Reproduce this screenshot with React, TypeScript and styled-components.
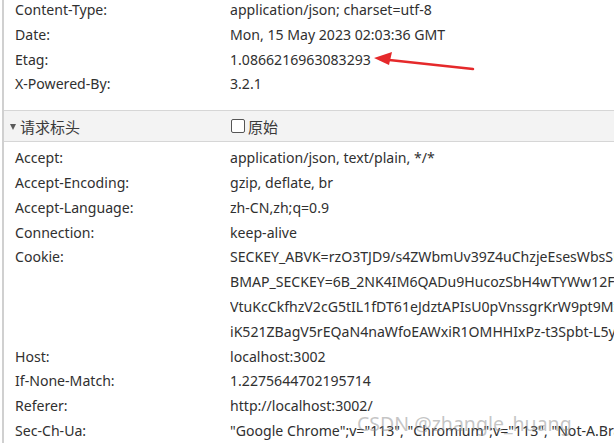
import React, { FC } from "react";
import styled, { createGlobalStyle } from "styled-components";

const GlobalStyle = createGlobalStyle`
  html, body {
    margin: 0;
    padding: 0;
    background: #ffffff;
    overflow: hidden;
  }
  body {
    font-family: "Noto Sans", "Noto Sans CJK SC", sans-serif;
    color: #303030;
  }
`;

const Page = styled.div`
  position: relative;
  width: 614px;
  height: 443px;
  overflow: hidden;
  border-left: 2px solid #d0d0d0;
  margin-left: 2px;
  box-sizing: border-box;
`;

const Section = styled.div<{ top?: number; bottom?: number }>`
  padding: ${(p) => p.top ?? 0}px 0 ${(p) => p.bottom ?? 0}px 11px;
`;

const Row = styled.div`
  display: grid;
  grid-template-columns: 215px 1fr;
  font-size: 14.1px;
  line-height: 24.8px;
  white-space: nowrap;
`;

const Label = styled.div``;

const Value = styled.div`
  overflow: hidden;
`;

const Header = styled.div`
  display: grid;
  grid-template-columns: 215px 1fr;
  align-items: center;
  height: 30px;
  padding-left: 6px;
  background: #f3f3f3;
  border-top: 1px solid #d6d6d6;
  border-bottom: 1px solid #d6d6d6;
  font-size: 15px;
  color: #3a3a3a;
`;

const Toggle = styled.div`
  display: flex;
  align-items: center;
  gap: 4px;
`;

const Triangle = styled.span`
  width: 0;
  height: 0;
  border-left: 3.5px solid transparent;
  border-right: 3.5px solid transparent;
  border-top: 6px solid #5a5a5a;
  margin-top: 1px;
`;

const Raw = styled.label`
  display: flex;
  align-items: center;
  gap: 3px;
  margin-left: 6px;
`;

const Box = styled.span`
  width: 12px;
  height: 12px;
  border: 1px solid #555;
  border-radius: 2px;
  background: #fff;
`;

const Watermark = styled.div`
  position: absolute;
  left: 353px;
  top: 410px;
  font-size: 19.5px;
  color: rgba(140, 140, 140, 0.5);
  white-space: nowrap;
  pointer-events: none;
`;

const Arrow = styled.svg`
  position: absolute;
  left: 362px;
  top: 50px;
`;

type Pair = [string, string | string[]];

const response: Pair[] = [
  ["Content-Type:", "application/json; charset=utf-8"],
  ["Date:", "Mon, 15 May 2023 02:03:36 GMT"],
  ["Etag:", "1.0866216963083293"],
  ["X-Powered-By:", "3.2.1"],
];

const request: Pair[] = [
  ["Accept:", "application/json, text/plain, */*"],
  ["Accept-Encoding:", "gzip, deflate, br"],
  ["Accept-Language:", "zh-CN,zh;q=0.9"],
  ["Connection:", "keep-alive"],
  [
    "Cookie:",
    [
      "SECKEY_ABVK=rzO3TJD9/s4ZWbmUv39Z4uChzjeEsesWbsSHq1Kc2Y",
      "BMAP_SECKEY=6B_2NK4IM6QADu9HucozSbH4wTYWw12FxqYbmT",
      "VtuKcCkfhzV2cG5tIL1fDT61eJdztAPIsU0pVnssgrKrW9pt9MxQ",
      "iK521ZBagV5rEQaN4naWfoEAWxiR1OMHHIxPz-t3Spbt-L5yQ",
    ],
  ],
  ["Host:", "localhost:3002"],
  ["If-None-Match:", "1.2275644702195714"],
  ["Referer:", "http://localhost:3002/"],
  ["Sec-Ch-Ua:", "\"Google Chrome\";v=\"113\", \"Chromium\";v=\"113\", \"Not-A.Brand\";v=\"24\""],
];

const HeaderRows: FC<{ rows: Pair[] }> = ({ rows }) => (
  <>
    {rows.map(([k, v]) => (
      <Row key={k}>
        <Label>{k}</Label>
        <Value>
          {Array.isArray(v) ? v.map((line) => <div key={line}>{line}</div>) : v}
        </Value>
      </Row>
    ))}
  </>
);

export default function App() {
  return (
    <>
      <GlobalStyle />
      <Page>
        <Section top={0} bottom={13} style={{ marginTop: -2 }}>
          <HeaderRows rows={response} />
        </Section>
        <Header>
          <Toggle>
            <Triangle />
            <span>请求标头</span>
          </Toggle>
          <Raw>
            <Box />
            <span>原始</span>
          </Raw>
        </Header>
        <Section top={4}>
          <HeaderRows rows={request} />
        </Section>
        <Arrow width="112" height="24" viewBox="0 0 112 24">
          <path d="M14 9 L107 19" stroke="#e5292b" strokeWidth="2.5" strokeLinecap="round" />
          <path d="M8 8 L26 2 L23 15 Z" fill="#e5292b" />
        </Arrow>
        <Watermark>CSDN @zhangle_huang</Watermark>
      </Page>
    </>
  );
}
